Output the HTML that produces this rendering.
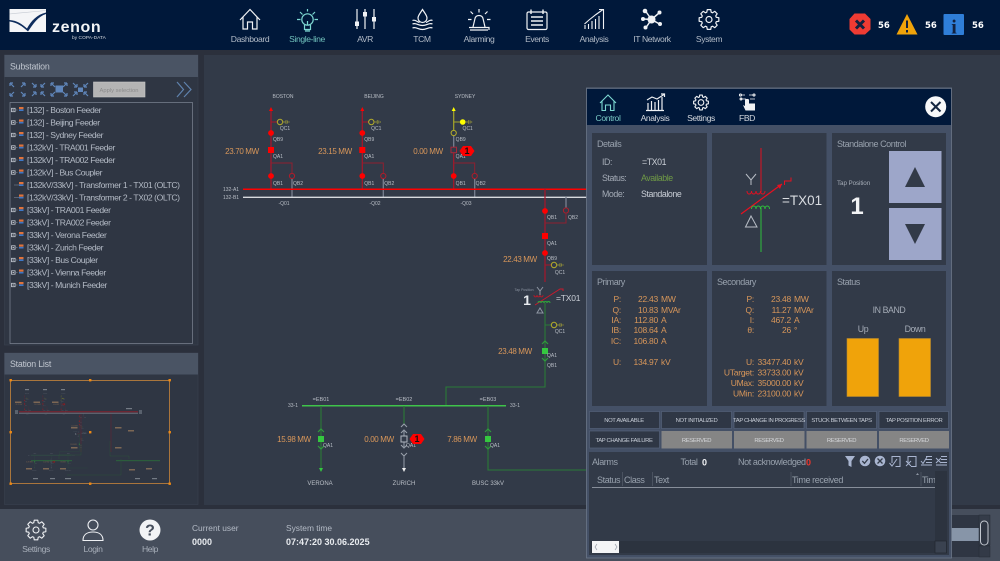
<!DOCTYPE html>
<html><head><meta charset="utf-8"><title>zenon</title>
<style>
html,body{margin:0;padding:0;background:#2b303c;width:1000px;height:561px;overflow:hidden}
svg{display:block}
text{font-family:"Liberation Sans",sans-serif;fill:#b4bbc6;font-size:9px}
.nav{font-size:8.6px;text-anchor:middle;fill:#b3bcc8;letter-spacing:-.4px}
.tr{font-size:8.6px;fill:#b4bbc6;letter-spacing:-.43px}
.t{font-size:5px;fill:#b9bec6;text-anchor:middle}
.mw{font-size:8px;fill:#d9975a;text-anchor:middle;letter-spacing:-.35px}
.ttl{font-size:9px;fill:#98a1ad;letter-spacing:-.45px}
.o{font-size:8.5px;fill:#d9975a;letter-spacing:-.25px}
.r{text-anchor:end}
.b{font-size:5.9px;fill:#c6ccd6;text-anchor:middle;letter-spacing:-.38px}
.a{font-size:9px;fill:#98a1ad;letter-spacing:-.4px}
.d{font-size:8.8px;fill:#a4abb6;letter-spacing:-.42px}
.bold{font-weight:bold;fill:#e8ebef}
</style></head><body>
<svg width="1000" height="561" viewBox="0 0 1000 561" xmlns="http://www.w3.org/2000/svg">
<defs>
<path id="gear" d="M7.27-2.22L9.85-1.74V1.74L7.27 2.22L6.71 3.57L8.19 5.74L5.74 8.19L3.57 6.71L2.22 7.27L1.74 9.85H-1.74L-2.22 7.27L-3.57 6.71L-5.74 8.19L-8.19 5.74L-6.71 3.57L-7.27 2.22L-9.85 1.74V-1.74L-7.27-2.22L-6.71-3.57L-8.19-5.74L-5.74-8.19L-3.57-6.71L-2.22-7.27L-1.74-9.85H1.74L2.22-7.27L3.57-6.71L5.74-8.19L8.19-5.74L6.71-3.57Z" fill="none" stroke-linejoin="round"/>
<g id="earth"><circle cx="9" cy="0" r="2.7" fill="none" stroke="#b5ad2a" stroke-width="1"/><path d="M11.7 0H15M15-2V2M16.5-1.5V1.5M18-.8V.8" stroke="#8b8a3a" stroke-width=".9" fill="none"/></g>
<g id="fd">
<path d="M0 110V189" stroke="#a8162a" stroke-width="1.2"/>
<path d="M-2 111L0 107L2 111Z" fill="#f00"/>
<path d="M0 122H6.5" stroke="#a8162a"/>
<use href="#earth" y="122"/>
<circle cy="133" r="2.9" fill="#f00"/><rect x="-3" y="147" width="6" height="6" fill="#f00"/><circle cy="176" r="2.9" fill="#f00"/>
<path d="M0 163H21V173" fill="none" stroke="#8f2030"/>
<circle cx="21" cy="176" r="2.6" fill="#323a48" stroke="#b01c2a"/>
<path d="M21 179V197" stroke="#788090" stroke-width="1.3"/>
<text class="t" x="14" y="130">QC1</text><text class="t" x="7" y="141">QB9</text><text class="t" x="7" y="158">QA1</text><text class="t" x="7" y="185">QB1</text><text class="t" x="27" y="185">QB2</text>
</g>
<g id="dm"><path d="M-7.5 0L-4 -5H4L7.5 0L4 5H-4Z" fill="#f00"/></g>
<g id="chev"><path d="M-3 3L0 0L3 3" fill="none" stroke="#2f9c3c" stroke-width="1.2"/></g>
<g id="diag">
<use href="#fd" x="271"/><use href="#fd" x="362.3"/>
<g transform="translate(453.7 0)">
<path d="M0 110V130" stroke="#a7a62a" stroke-width="1.2"/><path d="M0 136V147" stroke="#788090" stroke-width="1.3"/><path d="M0 153V189" stroke="#a8162a" stroke-width="1.2"/>
<path d="M-2 111L0 107L2 111Z" fill="#ff0"/><path d="M0 122H6.5" stroke="#a7a62a"/>
<circle cx="9" cy="122" r="2.8" fill="#ff0"/><path d="M11.7 122H15M15 120V124M16.5 120.5V123.5M18 121.2V122.8" stroke="#8b8a3a" stroke-width=".9" fill="none"/>
<circle cy="133" r="2.6" fill="#323a48" stroke="#b5ad2a"/><rect x="-2.7" y="147.2" width="5.5" height="5.5" fill="none" stroke="#a8283a"/><circle cy="176" r="2.9" fill="#f00"/>
<path d="M0 163H21V173" fill="none" stroke="#8f2030"/><circle cx="21" cy="176" r="2.6" fill="#323a48" stroke="#b01c2a"/><path d="M21 179V197" stroke="#788090" stroke-width="1.3"/>
<text class="t" x="14" y="130">QC1</text><text class="t" x="7" y="141">QB9</text><text class="t" x="7" y="158">QA1</text><text class="t" x="7" y="185">QB1</text><text class="t" x="27" y="185">QB2</text>
</g>
<use href="#dm" x="467" y="151"/><text x="467" y="154" style="fill:#111;text-anchor:middle;font-weight:bold;font-size:9px">1</text>
<text class="t" x="283" y="98">BOSTON</text><text class="t" x="374" y="98">BEIJING</text><text class="t" x="465" y="98">SYDNEY</text>
<text class="mw" x="242" y="154">23.70 MW</text><text class="mw" x="335" y="154">23.15 MW</text><text class="mw" x="428" y="154">0.00 MW</text>
<path d="M243 189.3H838" stroke="#f00" stroke-width="1.5"/><path d="M243 197.3H838" stroke="#d8dadf" stroke-width="1.3"/>
<text class="t" x="231" y="191">132-A1</text><text class="t" x="231" y="199">132-B1</text>
<text class="t" x="284" y="205">-Q01</text><text class="t" x="375" y="205">-Q02</text><text class="t" x="466" y="205">-Q03</text>
<path d="M545 189V282" stroke="#a8162a" stroke-width="1.2"/>
<path d="M566 197V208" stroke="#788090" stroke-width="1.3"/><circle cx="545" cy="211" r="2.9" fill="#f00"/><circle cx="566" cy="210.5" r="2.6" fill="#323a48" stroke="#b01c2a"/>
<path d="M545 223H566V213" fill="none" stroke="#8f2030"/>
<rect x="542" y="233" width="6" height="6" fill="#f00"/><circle cx="545" cy="253" r="2.9" fill="#f00"/>
<path d="M545 265H551" stroke="#a8162a"/><use href="#earth" x="545" y="265"/>
<text class="t" x="552" y="219">QB1</text><text class="t" x="573" y="219">QB2</text><text class="t" x="552" y="245">QA1</text><text class="t" x="552" y="260">QB9</text><text class="t" x="560" y="274">QC1</text>
<text class="mw" x="520" y="262">22.43 MW</text><text class="mw" x="515" y="354">23.48 MW</text>
<path d="M537 287L540 291L543 287M540 291V295" fill="none" stroke="#8d95a2"/>
<path d="M534 295c0 2.5 3 2.5 3 0c0 2.500 3 2.500 3 0c0 2.500 3 2.500 3 0" fill="none" stroke="#b01c2a"/>
<path d="M535 305L560 289H563V291" fill="none" stroke="#c8192c"/>
<path d="M538 303c0-2 3-2 3 0c0-2 3-2 3 0c0-2 3-2 3 0c0-2 3-2 3 0" fill="none" stroke="#2fa83a"/>
<path d="M540 308L543 313H537Z" fill="none" stroke="#8d95a2"/>
<text x="556" y="301" style="font-size:8.5px;fill:#c9ced6;letter-spacing:-.2px">=TX01</text>
<text x="524" y="291" style="font-size:3.5px;fill:#8d95a2;text-anchor:middle">Tap Position</text>
<text x="527" y="305" style="font-size:14px;font-weight:bold;fill:#e8ebef;text-anchor:middle">1</text>
<path d="M545 303V387H446V405" fill="none" stroke="#2a7a38" stroke-width="1.1"/>
<path d="M545 325H551" stroke="#2a7a38"/><use href="#earth" x="545" y="325"/><text class="t" x="560" y="333">QC1</text>
<rect x="542" y="348" width="6" height="6" fill="#35c840"/><use href="#chev" x="545" y="341"/><use href="#chev" transform="translate(545 361) scale(1 -1)"/>
<text class="t" x="552" y="357">QA1</text><text class="t" x="552" y="367">QB1</text>
<path d="M302 405.7H506" stroke="#3fc34a" stroke-width="1.5"/>
<text class="t" x="293" y="407">33-1</text><text class="t" x="515" y="407">33-1</text>
<text class="t" x="321" y="401" style="font-size:5.5px">=EB01</text><text class="t" x="404" y="401" style="font-size:5.5px">=EB02</text><text class="t" x="488" y="401" style="font-size:5.5px">=EB03</text>
<path d="M321 406V468" stroke="#2a7a38" stroke-width="1.1"/><rect x="318" y="436" width="6" height="6" fill="#35c840"/><path d="M319 468L321 472L323 468Z" fill="#35c840"/>
<use href="#chev" x="321" y="429"/><use href="#chev" transform="translate(321 449) scale(1 -1)"/>
<path d="M404 406V424" stroke="#2a7a38" stroke-width="1.1"/><path d="M401 427L404 424L407 427M401 433L404 430L407 433M401 445L404 448L407 445M401 453L404 456L407 453" fill="none" stroke="#9aa1ac"/>
<path d="M404 430V436M404 442V448M404 456V468" stroke="#8d95a2" stroke-width="1.1"/><rect x="401" y="436" width="6" height="6" fill="none" stroke="#b0b6bf"/><path d="M402 468L404 472L406 468Z" fill="#eee"/>
<path d="M488 406V470H586" fill="none" stroke="#2a7a38" stroke-width="1.1"/><rect x="485" y="436" width="6" height="6" fill="#35c840"/>
<use href="#chev" x="488" y="429"/><use href="#chev" transform="translate(488 449) scale(1 -1)"/>
<text class="t" x="328" y="447">QA1</text><text class="t" x="411" y="447">QA1</text><text class="t" x="495" y="447">QA1</text>
<text class="mw" x="294" y="442">15.98 MW</text><text class="mw" x="379" y="442">0.00 MW</text><text class="mw" x="462" y="442">7.86 MW</text>
<use href="#dm" x="417" y="439"/><text x="417" y="442" style="fill:#111;text-anchor:middle;font-weight:bold;font-size:9px">1</text>
<text class="t" x="320" y="485" style="font-size:6px">VERONA</text><text class="t" x="404" y="485" style="font-size:6px">ZURICH</text><text class="t" x="488" y="485" style="font-size:6px">BUSC 33kV</text>
</g>
<g id="ar"><path d="M0 0H3M0 0V3M0 0L4 4" fill="none" stroke="#5f86bb" stroke-width="1.2"/></g>
<g id="tk"><rect x="-2" y="-1.7" width="3.6" height="3.4" fill="none" stroke="#c9ced6" stroke-width=".8"/><path d="M-1 0H.6" stroke="#d8dce2" stroke-width=".8"/><path d="M1.6 0H4" stroke="#697282" stroke-width=".8"/></g>
<g id="fl"><rect x="0" y="-3" width="4.5" height="2.2" fill="#e0733a"/><rect x="0" y="-.6" width="4.5" height="1.6" fill="#3d78c8"/></g>
</defs>
<rect width="1000" height="561" fill="#2b303c"/>
<rect x="204" y="55" width="796" height="450" fill="#323a48"/>
<rect width="1000" height="50" fill="#00183a"/>
<!-- logo -->
<rect x="9.5" y="9" width="36.5" height="23" fill="#f4f5f7"/>
<path d="M9.5 20C17 20.5 22 24 27 28.500C31 21 37 14.500 46 12.500V14C38 16.500 33 24 28 31.500C22 26 17 22.500 9.500 21.500Z" fill="#0e2c5c"/>
<path d="M9.500 14C18 13 32 12 46 10.500" fill="none" stroke="#c5cad2" stroke-width=".6"/>
<text x="52" y="32" style="font-size:16px;font-weight:bold;fill:#f2f4f6;letter-spacing:.6px">zenon</text>
<text x="72" y="39" style="font-size:4.8px;fill:#d5d9df;letter-spacing:.05px">by COPA-DATA</text>
<!-- nav icons -->
<g fill="none" stroke="#f0f2f5" stroke-width="1.2">
<path d="M240 20L250 9.5L260 20M243 17V29H247.5V22H252.5V29H257V17"/>
<g stroke="#7dd8d2"><circle cx="307.5" cy="19.5" r="5.7"/><path d="M304.5 25V29.5H310.5V25M305 31H310M307.5 25V21M297 19.5H300.5M314.500 19.500H318M300 12L302.500 14.500M315 12L312.500 14.500M307.500 9V11.500"/></g>
<path d="M357 9V29M365 9V29M374 9V29"/>
<g fill="#f0f2f5" stroke="none"><rect x="355" y="21.5" width="4" height="4.5"/><rect x="363" y="12" width="4" height="4.5"/><rect x="372" y="17" width="4" height="4.5"/></g>
<path d="M422.5 9.5C425 13.5 427 15.5 427 18A4.5 4.5 0 0 1 418 18C418 15.500 420 13.500 422.500 9.500Z"/><path d="M412.500 20.500C415 19 417 22 419.500 22.500M426 22.500C428 22 430 19 432.500 20.500M412.500 24C416 22.500 418 25.500 422.500 25.500S429 22.500 432.500 24M412.500 28C416 26.500 418 29.500 422.500 29.500S429 26.500 432.500 28"/>
<path d="M473 27L475 18.500C475.500 16.500 477 15.500 479 15.500S482.500 16.500 483 18.500L485 27M469 27.500H489V30M470 30H488M479 9V12.500M470.500 11.500L473 14M487.500 11.500L485 14M468 19.500H471.500M487 19.500H490.500"/>
<rect x="527" y="12" width="20" height="17.500" rx="1.500"/><path d="M531 9.500V14M543 9.500V14M531 17H543M531 21H543M531 25H543" stroke-width="1.400"/>
<path d="M584.500 24L589 20L596 14.500L603 9.500M599 9.500H603.500V13.500" stroke-width="1.100"/><path d="M585 25V29M588.500 24V29M592 21V29M595.500 19V29M599 16V29M603.500 13.500V29" stroke-width="1.100"/>
<g stroke-width="1.500"><path d="M651.500 19.500L645.500 11M651.500 19.500L659 13M651.500 19.500L643.500 19M651.500 19.500L646 27.500M651.500 19.500L659.500 24"/></g>
<g fill="#f0f2f5" stroke="none"><circle cx="651.500" cy="19.500" r="4"/><circle cx="645" cy="11" r="2.300"/><circle cx="659.500" cy="12.500" r="2"/><circle cx="643" cy="19" r="2"/><circle cx="645.500" cy="27.500" r="2"/><circle cx="660" cy="24" r="2"/></g>
<use href="#gear" x="709" y="19.500"/><circle cx="709" cy="19.500" r="3"/>
</g>
<text class="nav" x="250" y="42">Dashboard</text><text class="nav" x="307" y="42" style="fill:#6fc0bb">Single-line</text><text class="nav" x="365" y="42">AVR</text><text class="nav" x="422" y="42">TCM</text><text class="nav" x="479" y="42">Alarming</text><text class="nav" x="537" y="42">Events</text><text class="nav" x="594" y="42">Analysis</text><text class="nav" x="652" y="42">IT Network</text><text class="nav" x="709" y="42">System</text>
<!-- alerts -->
<path d="M854.500 14H865L870.500 19.500V30L865 35H854.500L849.500 30V19.500Z" transform="translate(0 -.5)" fill="#ee3b33"/><path d="M856 20.500L864 28.500M864 20.500L856 28.500" stroke="#12213f" stroke-width="3"/>
<text x="878" y="28" class="bold" style="font-size:8.5px;fill:#fff;font-family:'DejaVu Sans',sans-serif">56</text>
<path d="M907 14L917.500 34.500H896.500Z" fill="#f0a30a"/><path d="M907 20.500V28M907 30V32.500" stroke="#12213f" stroke-width="2"/>
<text x="925" y="28" class="bold" style="font-size:8.5px;fill:#fff;font-family:'DejaVu Sans',sans-serif">56</text>
<rect x="943.500" y="14" width="20.500" height="21" rx="1" fill="#2f7ed8"/>
<text x="954" y="33.500" style="font-family:'Liberation Serif',serif;font-weight:bold;font-size:20px;fill:#12213f;text-anchor:middle">i</text>
<text x="972" y="28" class="bold" style="font-size:8.5px;fill:#fff;font-family:'DejaVu Sans',sans-serif">56</text>
<!-- left panels -->
<rect x="4.500" y="55" width="193.500" height="290" fill="#2f3643" stroke="#3a4250" stroke-width=".6"/>
<rect x="4.500" y="55" width="193.500" height="22" fill="#4a5464"/>
<text x="10" y="69.500" style="font-size:8.8px;fill:#c0c6cf;letter-spacing:-.2px">Substation</text>
<g>
<use href="#ar" x="10" y="83"/><use href="#ar" transform="translate(25 83) scale(-1 1)"/><use href="#ar" transform="translate(10 96) scale(1 -1)"/><use href="#ar" transform="translate(25 96) scale(-1 -1)"/>
<use href="#ar" transform="translate(36 87) scale(-1 -1)"/><use href="#ar" transform="translate(41 87) scale(1 -1)"/><use href="#ar" transform="translate(36 92) scale(-1 1)"/><use href="#ar" x="41" y="92"/>
<use href="#ar" x="51" y="83"/><use href="#ar" transform="translate(67 83) scale(-1 1)"/><use href="#ar" transform="translate(51 96) scale(1 -1)"/><use href="#ar" transform="translate(67 96) scale(-1 -1)"/><rect x="55.500" y="85.500" width="7.500" height="7" fill="#5f86bb"/>
<use href="#ar" transform="translate(77 87) scale(-1 -1)"/><use href="#ar" transform="translate(84 87) scale(1 -1)"/><use href="#ar" transform="translate(77 92) scale(-1 1)"/><use href="#ar" x="84" y="92"/><rect x="78" y="87.500" width="5" height="4.500" fill="#5f86bb"/>
</g>
<rect x="93.500" y="82" width="51.500" height="15" fill="#b4b4b4" stroke="#c9c9c9" stroke-width=".6"/>
<text x="119" y="92" style="font-size:5.800px;fill:#8b8b8b;text-anchor:middle">Apply selection</text>
<path d="M177 82L183.500 89.500L177 97M184 82L191 89.500L184 97" fill="none" stroke="#5f82ad" stroke-width="1.200"/>
<rect x="10" y="102.500" width="182.500" height="241" fill="#2f3643" stroke="#7f8794" stroke-width=".7"/>
<g>
<use href="#tk" x="13.500" y="110"/><use href="#fl" x="19" y="110"/><text class="tr" x="27" y="113">[132] - Boston Feeder</text>
<use href="#tk" x="13.500" y="122.500"/><use href="#fl" x="19" y="122.500"/><text class="tr" x="27" y="125.500">[132] - Beijing Feeder</text>
<use href="#tk" x="13.500" y="135"/><use href="#fl" x="19" y="135"/><text class="tr" x="27" y="138">[132] - Sydney Feeder</text>
<use href="#tk" x="13.500" y="147.500"/><use href="#fl" x="19" y="147.500"/><text class="tr" x="27" y="150.500">[132kV] - TRA001 Feeder</text>
<use href="#tk" x="13.500" y="160"/><use href="#fl" x="19" y="160"/><text class="tr" x="27" y="163">[132kV] - TRA002 Feeder</text>
<use href="#tk" x="13.500" y="172.500"/><use href="#fl" x="19" y="172.500"/><text class="tr" x="27" y="175.500">[132kV] - Bus Coupler</text>
<path d="M14 185H19M14 197.500H19" stroke="#697282" stroke-width=".8"/><use href="#fl" x="19" y="185"/><text class="tr" x="27" y="188">[132kV/33kV] - Transformer 1 - TX01 (OLTC)</text>
<use href="#fl" x="19" y="197.500"/><text class="tr" x="27" y="200.500">[132kV/33kV] - Transformer 2 - TX02 (OLTC)</text>
<use href="#tk" x="13.500" y="210"/><use href="#fl" x="19" y="210"/><text class="tr" x="27" y="213">[33kV] - TRA001 Feeder</text>
<use href="#tk" x="13.500" y="222.500"/><use href="#fl" x="19" y="222.500"/><text class="tr" x="27" y="225.500">[33kV] - TRA002 Feeder</text>
<use href="#tk" x="13.500" y="235"/><use href="#fl" x="19" y="235"/><text class="tr" x="27" y="238">[33kV] - Verona Feeder</text>
<use href="#tk" x="13.500" y="247.500"/><use href="#fl" x="19" y="247.500"/><text class="tr" x="27" y="250.500">[33kV] - Zurich Feeder</text>
<use href="#tk" x="13.500" y="260"/><use href="#fl" x="19" y="260"/><text class="tr" x="27" y="263">[33kV] - Bus Coupler</text>
<use href="#tk" x="13.500" y="272.500"/><use href="#fl" x="19" y="272.500"/><text class="tr" x="27" y="275.500">[33kV] - Vienna Feeder</text>
<use href="#tk" x="13.500" y="285"/><use href="#fl" x="19" y="285"/><text class="tr" x="27" y="288">[33kV] - Munich Feeder</text>
</g>
<rect x="4.500" y="353" width="193.500" height="151.500" fill="#2f3643" stroke="#3a4250" stroke-width=".6"/>
<rect x="4.500" y="353" width="193.500" height="21.500" fill="#4a5464"/>
<text x="10" y="367" style="font-size:8.8px;fill:#c0c6cf;letter-spacing:-.2px">Station List</text>
<!-- minimap -->
<use href="#diag" transform="translate(-29.600 374) scale(.2)" opacity=".42"/>
<g opacity=".75">
<rect x="19" y="411" width="119" height="1.400" fill="#7c2330"/><rect x="19" y="412.700" width="119" height="1" fill="#777d88"/><rect x="15" y="410" width="3" height="4" fill="#68707c"/><rect x="139" y="410" width="3" height="4" fill="#68707c"/>
<rect x="116" y="460" width="44" height="1.200" fill="#2c6a3a"/><rect x="31" y="460" width="41" height="1.200" fill="#2c6a3a"/>
<path d="M111 414V452" stroke="#6b2230" stroke-width=".7"/><path d="M81 414V452" stroke="#6b2230" stroke-width=".7"/>
<g fill="#96785a"><rect x="15" y="401.500" width="6.500" height="1.500"/><rect x="33.500" y="401.500" width="6.500" height="1.500"/><rect x="52" y="401.500" width="6.500" height="1.500"/><rect x="71" y="427" width="6.500" height="1.500"/><rect x="115" y="427" width="6.500" height="1.500"/><rect x="128" y="430" width="6" height="1.500"/><rect x="71" y="447" width="6.500" height="1.500"/><rect x="115" y="447" width="6.500" height="1.500"/><rect x="26" y="468" width="6" height="1.500"/><rect x="43" y="468" width="6" height="1.500"/><rect x="60" y="468" width="6" height="1.500"/><rect x="129" y="469" width="6" height="1.500"/><rect x="146" y="468" width="6" height="1.500"/></g>
<g fill="#8c929c"><rect x="25" y="389" width="4" height="1.200"/><rect x="43" y="389" width="4" height="1.200"/><rect x="61" y="389" width="4" height="1.200"/><rect x="126" y="408" width="6" height="1.200"/><rect x="33" y="478" width="5" height="1.200"/><rect x="50" y="478" width="5" height="1.200"/><rect x="65" y="478" width="6" height="1.200"/><rect x="135" y="478" width="5" height="1.200"/><rect x="152" y="478" width="5" height="1.200"/></g>
<path d="M59 459V455H81V444M67 475H121V459M110 441V456H129V459" fill="none" stroke="#2c5a38" stroke-width=".5"/>
</g>
<rect x="10.500" y="380.500" width="159" height="103" fill="none" stroke="#b87d3c" stroke-width=".9"/>
<g fill="#f08a14"><rect x="9.500" y="379" width="2.400" height="2.400"/><rect x="89" y="379" width="2.400" height="2.400"/><rect x="168.500" y="379" width="2.400" height="2.400"/><rect x="9.500" y="431" width="2.400" height="2.400"/><rect x="89" y="431" width="2.400" height="2.400"/><rect x="168.500" y="431" width="2.400" height="2.400"/><rect x="9.500" y="482.500" width="2.400" height="2.400"/><rect x="89" y="482.500" width="2.400" height="2.400"/><rect x="168.500" y="482.500" width="2.400" height="2.400"/></g>
<!-- main diagram -->
<use href="#diag"/>
<!-- bottom -->
<rect y="509" width="1000" height="52" fill="#464e5c"/>
<g fill="none" stroke="#eef0f3" stroke-width="1.100">
<use href="#gear" x="36" y="530"/><circle cx="36" cy="530" r="3"/>
<circle cx="93" cy="525" r="5"/><path d="M83 540.500C83 534 88 532 93 532S103 534 103 540.500Z"/>
</g>
<circle cx="150" cy="530" r="10.500" fill="#f2f3f5"/>
<text x="150" y="535.500" style="font-size:16px;font-weight:bold;fill:#464e5c;text-anchor:middle">?</text>
<text class="nav" x="36" y="552" style="fill:#a8afba">Settings</text><text class="nav" x="93" y="552" style="fill:#a8afba">Login</text><text class="nav" x="150" y="552" style="fill:#a8afba">Help</text>
<text x="192" y="531" style="font-size:8.4px;fill:#b4bbc6">Current user</text>
<text x="192" y="545" style="font-size:9px;font-weight:bold;fill:#e8ebef">0000</text>
<text x="286" y="531" style="font-size:8.4px;fill:#b4bbc6">System time</text>
<text x="286" y="545" style="font-size:9px;font-weight:bold;fill:#e8ebef">07:47:20 30.06.2025</text>
<!-- right-lower scroll -->
<rect x="950" y="515" width="40" height="42" fill="#2f3643"/>
<rect x="950" y="528" width="29" height="13" fill="#8795a8"/>
<rect x="979" y="515" width="11" height="30" fill="#353c49" stroke="#252a34" stroke-width=".5"/>
<rect x="980.500" y="521" width="7.500" height="24" rx="3.700" fill="#2f3643" stroke="#c2c7cf"/>
<rect x="979" y="546" width="11" height="11" fill="#333a47" stroke="#252a34" stroke-width=".5"/>
<!-- popup -->
<rect x="586.500" y="88" width="365" height="470" fill="#445066" stroke="#6c7789" stroke-width=".8"/>
<rect x="587" y="89" width="364" height="36" fill="#00183a"/>
<g fill="none" stroke="#7dd8d2" stroke-width="1.100"><path d="M600 103L608 95L616 103M602 101V110.500H605.500V105H610.500V110.500H614V101"/></g>
<g fill="none" stroke="#eef0f3" stroke-width="1.100">
<path d="M647 100L652 97L657 99L664 94.500M661 94H664.500V97M648 110V103M651.500 110V101M655 110V102M658.500 110V100M662 110V97M646 110.500H664" stroke-width="1.200"/>
<use href="#gear" transform="translate(701 102.500) scale(.75)" stroke-width="1.500"/><circle cx="701" cy="102.500" r="2.800"/>
<path d="M741 95H745M749 95H753M741 99H746M750 99H755" stroke-width=".8"/><circle cx="740.500" cy="95" r="1"/><circle cx="754" cy="95" r="1"/><circle cx="741" cy="99" r=".9"/>
</g>
<path d="M745 100V106L743 105L745.500 110.500H755V103.500H749V100C749 98.500 745 98.500 745 100Z" fill="#f2f3f5"/>
<text class="nav" x="608" y="121" style="fill:#79c9c5">Control</text><text class="nav" x="655" y="121" style="fill:#d4d8de">Analysis</text><text class="nav" x="701" y="121" style="fill:#d4d8de">Settings</text><text class="nav" x="747" y="121" style="fill:#d4d8de">FBD</text>
<circle cx="935.700" cy="106.700" r="10.500" fill="#f7f8f9"/><path d="M931 102L940.500 111.500M940.500 102L931 111.500" stroke="#142640" stroke-width="2"/>
<g fill="#323a48">
<rect x="592" y="133" width="115" height="132"/><rect x="712" y="133" width="114.500" height="132"/><rect x="832" y="133" width="114" height="132"/>
<rect x="592" y="271" width="115" height="135"/><rect x="712" y="271" width="114.500" height="135"/><rect x="832" y="271" width="114" height="135"/>
</g>
<text class="ttl" x="597" y="147">Details</text>
<text class="d" x="602" y="165">ID:</text><text class="d" x="642" y="165" style="fill:#c9ced6">=TX01</text>
<text class="d" x="602" y="181">Status:</text><text class="d" x="641" y="181" style="fill:#6f9a46">Available</text>
<text class="d" x="602" y="197">Mode:</text><text class="d" x="641" y="197" style="fill:#c9ced6">Standalone</text>
<path d="M761 148V192" stroke="#e01020" stroke-width="1"/>
<path d="M746 174L751 180L756 174M751 180V185" fill="none" stroke="#b9bec6" stroke-width="1"/>
<path d="M747 191c0 4 4.500 4 4.500 0c0 4 4.500 4 4.500 0c0 4 4.500 4 4.500 0c0 4 4.500 4 4.500 0" fill="none" stroke="#e01020"/>
<path d="M741 214L782 184" stroke="#e81020" stroke-width="1.200"/><path d="M777 185L782 184L780 189Z" fill="#e81020"/>
<path d="M784.500 185V181H791V177.500" fill="none" stroke="#e81020" stroke-width="1"/>
<path d="M752 210c0-4 4.500-4 4.500 0c0-4 4.500-4 4.500 0c0-4 4.500-4 4.500 0c0-4 4.500-4 4.500 0" transform="translate(-.5 -1)" fill="none" stroke="#2fc03c"/>
<path d="M761 208V252" stroke="#2fc03c" stroke-width="1"/>
<path d="M751 216L757 227H745.500Z" fill="none" stroke="#b9bec6" stroke-width="1"/>
<text x="782" y="205" style="font-size:13.500px;fill:#d9dce1">=TX01</text>
<text class="ttl" x="837" y="147">Standalone Control</text>
<rect x="889" y="151" width="52.500" height="52" fill="#9da6c9"/><path d="M905 187L915 167L925 187Z" fill="#323a48"/>
<rect x="889" y="208" width="52.500" height="52" fill="#9da6c9"/><path d="M905 224L925 224L915 244Z" fill="#323a48"/>
<text x="837" y="185" style="font-size:6.3px;fill:#a4abb6;letter-spacing:-.1px">Tap Position</text>
<text x="857" y="214" style="font-size:24px;font-weight:bold;fill:#f2f3f5;text-anchor:middle">1</text>
<text class="ttl" x="597" y="285">Primary</text>
<text class="o r" x="621" y="302">P:</text><text class="o r" x="658" y="302">22.43</text><text class="o" x="661" y="302">MW</text>
<text class="o r" x="621" y="313">Q:</text><text class="o r" x="658" y="313">10.83</text><text class="o" x="661" y="313">MVAr</text>
<text class="o r" x="621" y="323">IA:</text><text class="o r" x="658" y="323">112.80</text><text class="o" x="661" y="323">A</text>
<text class="o r" x="621" y="333">IB:</text><text class="o r" x="658" y="333">108.64</text><text class="o" x="661" y="333">A</text>
<text class="o r" x="621" y="344">IC:</text><text class="o r" x="658" y="344">106.80</text><text class="o" x="661" y="344">A</text>
<text class="o r" x="621" y="365">U:</text><text class="o r" x="658" y="365">134.97</text><text class="o" x="661" y="365">kV</text>
<text class="ttl" x="717" y="285">Secondary</text>
<text class="o r" x="754" y="302">P:</text><text class="o r" x="791" y="302">23.48</text><text class="o" x="794" y="302">MW</text>
<text class="o r" x="754" y="313">Q:</text><text class="o r" x="791" y="313">11.27</text><text class="o" x="794" y="313">MVAr</text>
<text class="o r" x="754" y="323">I:</text><text class="o r" x="791" y="323">467.2</text><text class="o" x="794" y="323">A</text>
<text class="o r" x="754" y="333">θ:</text><text class="o r" x="791" y="333">26</text><text class="o" x="794" y="333">°</text>
<text class="o r" x="754" y="365">U:</text><text class="o r" x="791" y="365">33477.40</text><text class="o" x="794" y="365">kV</text>
<text class="o r" x="754" y="375.500">UTarget:</text><text class="o r" x="791" y="375.500">33733.00</text><text class="o" x="794" y="375.500">kV</text>
<text class="o r" x="754" y="386">UMax:</text><text class="o r" x="791" y="386">35000.00</text><text class="o" x="794" y="386">kV</text>
<text class="o r" x="754" y="396.500">UMin:</text><text class="o r" x="791" y="396.500">23100.00</text><text class="o" x="794" y="396.500">kV</text>
<text class="ttl" x="837" y="285">Status</text>
<text class="d" x="889" y="313" style="text-anchor:middle">IN BAND</text>
<text class="d" x="863" y="332" style="text-anchor:middle">Up</text><text class="d" x="915" y="332" style="text-anchor:middle">Down</text>
<rect x="847" y="338.500" width="31.500" height="58" fill="#f0a30a" stroke="#b98a30" stroke-width=".6"/><rect x="899" y="338.500" width="31.500" height="58" fill="#f0a30a" stroke="#b98a30" stroke-width=".6"/>
<g fill="#2f3745" stroke="#55617a" stroke-width=".7">
<rect x="589.500" y="411.500" width="70" height="17"/><rect x="661.500" y="411.500" width="70" height="17"/><rect x="734" y="411.500" width="70" height="17"/><rect x="806.500" y="411.500" width="70" height="17"/><rect x="879" y="411.500" width="69.500" height="17"/>
<rect x="589.500" y="431" width="70" height="17"/>
</g>
<g fill="#858585"><rect x="661.500" y="431" width="70.500" height="17.500"/><rect x="734" y="431" width="70.500" height="17.500"/><rect x="806.500" y="431" width="70.500" height="17.500"/><rect x="879" y="431" width="70" height="17.500"/></g>
<text class="b" x="624" y="422">NOT AVAILABLE</text><text class="b" x="696.500" y="422">NOT INITIALIZED</text><text class="b" x="769" y="422">TAP CHANGE IN PROGRESS</text><text class="b" x="841.500" y="422">STUCK BETWEEN TAPS</text><text class="b" x="914" y="422">TAP POSITION ERROR</text>
<text class="b" x="624" y="442">TAP CHANGE FAILURE</text>
<text class="b" x="696.500" y="442" style="fill:#d5d7da">RESERVED</text><text class="b" x="769" y="442" style="fill:#d5d7da">RESERVED</text><text class="b" x="841.500" y="442" style="fill:#d5d7da">RESERVED</text><text class="b" x="914" y="442" style="fill:#d5d7da">RESERVED</text>
<rect x="589" y="452" width="360" height="103" fill="#323a48"/>
<text class="a" x="592" y="465">Alarms</text><text class="a" x="680.500" y="465">Total</text><text x="702" y="465.500" style="font-size:9px;font-weight:bold;fill:#f2f3f5">0</text>
<text class="a" x="738" y="465">Not acknowledged</text><text x="806" y="465.500" style="font-size:9px;font-weight:bold;fill:#f0352c">0</text>
<path d="M845 456H855L851.500 461V467L848.500 465.500V461Z" fill="#a9b5d0"/>
<circle cx="865" cy="461" r="5.300" fill="#a9b5d0"/><path d="M862.300 461L864.500 463.300L868 459" fill="none" stroke="#323a48" stroke-width="1.300"/>
<circle cx="880" cy="461" r="5.300" fill="#a9b5d0"/><path d="M877.500 458.500L882.500 463.500M882.500 458.500L877.500 463.500" stroke="#323a48" stroke-width="1.300"/>
<g fill="none" stroke="#a9b5d0" stroke-width="1">
<path d="M892 463V456.500H900V466.500H895.500M889.500 463L892 466L897 459"/>
<path d="M908 463V456.500H916V466.500H911M906 461L911 466M911 461L906 466"/>
<path d="M926 456.500H932M926 459.500H932M926 462.500H932M921 465H932M921 461L923 463.500L927 457"/>
<path d="M941 456.500H947M941 459.500H947M941 462.500H947M936 465H947M936 458L941 463M941 458L936 463"/>
</g>
<text class="a" x="597" y="483">Status</text><text class="a" x="624" y="483">Class</text><text class="a" x="654" y="483">Text</text><text class="a" x="792" y="483">Time received</text><text class="a" x="922" y="483">Tim</text>
<path d="M622.500 472V486M652.500 472V486M791 472V486M921 472V486" stroke="#5a6272" stroke-width=".6"/>
<path d="M916 475L917.500 473L919 475Z" fill="#8d95a2"/>
<path d="M592 487.500H935" stroke="#a4abb6" stroke-width=".7"/>
<rect x="935" y="471" width="12" height="70" fill="#2c333f"/>
<rect x="591" y="541" width="356" height="12" fill="#2c333f"/>
<rect x="935" y="541" width="11.500" height="12" fill="#3a4250" stroke="#22272f" stroke-width=".7"/>
<rect x="592" y="541" width="27" height="12" fill="#f3f4f6"/><path d="M597 544L595 547L597 550M615 544L617 547L615 550" fill="none" stroke="#9aa1ac" stroke-width=".7"/>
</svg>
</body></html>
